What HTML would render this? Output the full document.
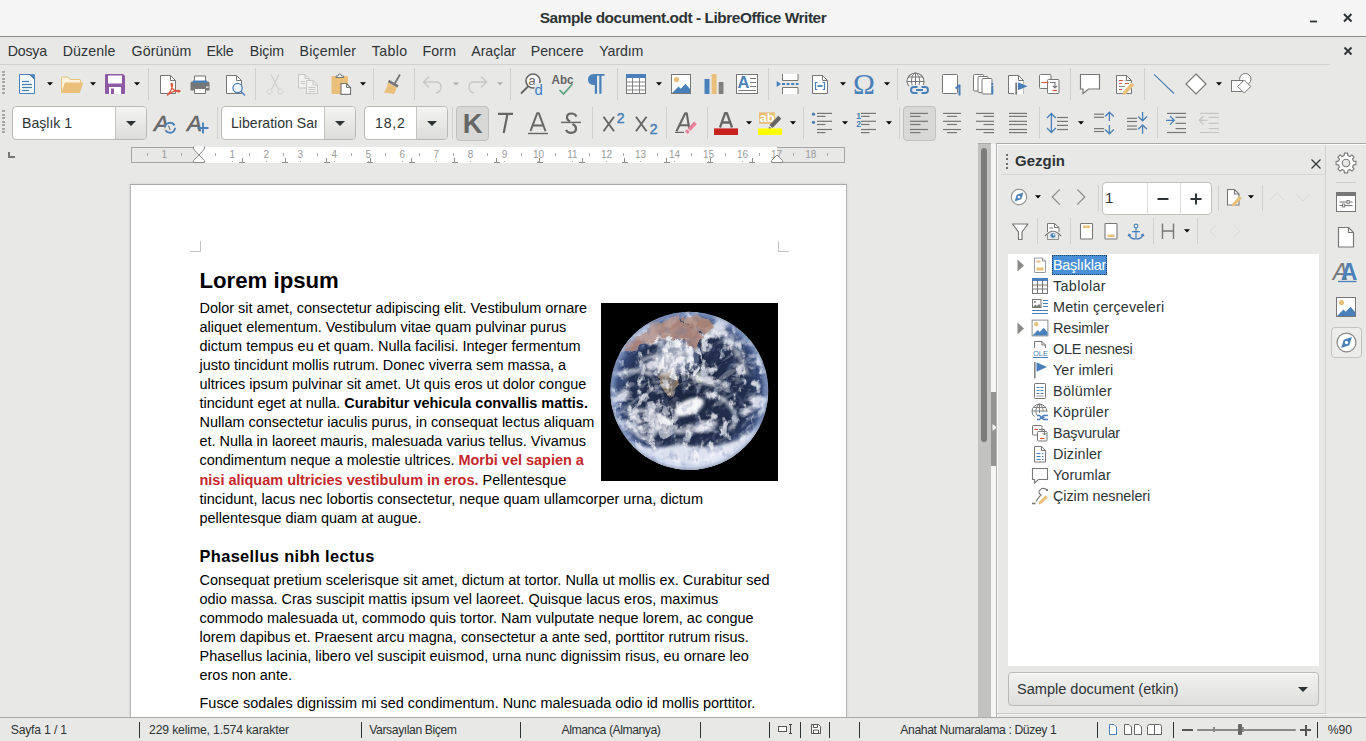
<!DOCTYPE html>
<html lang="tr"><head><meta charset="utf-8"><title>Sample document.odt - LibreOffice Writer</title>
<style>
*{box-sizing:border-box}
html,body{margin:0;padding:0}
body{width:1366px;height:741px;overflow:hidden;position:relative;background:#e8e8e7;font-family:"Liberation Sans",sans-serif;font-size:13.5px;color:#2e3436}
.ic{position:absolute;display:block;overflow:visible}
.sep{position:absolute;width:1px}
#title{position:absolute;left:0;top:0;width:1366px;height:37px;background:#f5f5f5;border-bottom:1px solid #8c8c8c}
#ttext{position:absolute;left:0;width:1366px;top:9px;text-align:center;font-weight:bold;font-size:15.4px;letter-spacing:-.44px;line-height:18px;color:#2e3436}
#menubar{position:absolute;left:0;top:37px;width:1366px;height:28px;background:#e8e8e7}
#menubar:after{content:'';position:absolute;left:0;top:27px;width:1330px;height:1px;background:#d2d2d0}
.mi{position:absolute;top:5.8px;font-size:14.2px;line-height:17px;color:#2e3436;white-space:nowrap}
#toolbars{position:absolute;left:0;top:0;width:1366px;height:145px}
.handle{position:absolute;left:2px;width:3px;height:23px;background:repeating-linear-gradient(to bottom,#a8a8a6 0 2px,transparent 2px 3.5px)}
.combo{position:absolute;background:#fff;border:1px solid #b9b9b6;border-radius:4px;overflow:hidden}
.ctext{position:absolute;top:6.5px;font-size:14.1px;line-height:18px;white-space:nowrap;color:#2e3436}
.cbtn{position:absolute;right:0;top:0;bottom:0;border-left:1px solid #c4c4c1;background:linear-gradient(#f4f4f3,#dcdcda)}
.pressed{position:absolute;background:#d8d8d6;border:1px solid #c1c1be;border-radius:4px}
#rulerL{position:absolute;left:0;top:145px;width:978px;height:40px;background:#e8e8e7}
#ruler{position:absolute;left:131px;top:147px;width:714px;height:16px;background:#fff;overflow:hidden;font-size:10px;color:#9a9a9a}
.rg{position:absolute;top:0;height:16px;background:#e8e8e7;border:1px solid #a4a4a4}

.rn{position:absolute;top:1px;width:20px;text-align:center;line-height:14px}
.rt{position:absolute;top:5.5px;width:1px;height:3px;background:#a8a8a8}
.tab{position:absolute;top:11px;width:6px;height:5px;border-bottom:1px solid #8e8e8e;background:linear-gradient(to right,transparent 2.5px,#8e8e8e 2.5px 3.5px,transparent 3.5px)}
#doc{position:absolute;left:0;top:165px;width:978px;height:552px;overflow:hidden;background:#e8e8e7}
#page{position:absolute;left:130px;top:19px;width:717px;height:900px;background:#fff;border:1px solid #b4b4b4;border-top-color:#a9a9a9;box-shadow:0 0 3px rgba(0,0,0,.12)}
.cm{position:absolute;width:11px;height:11px}
.ln{position:absolute;left:68.5px;margin:0;white-space:nowrap;color:#000}
.bt{font-size:14.47px;line-height:19px}
h1.ln{font-size:22.2px;line-height:26px;font-weight:bold}
h2.ln{font-size:16.4px;line-height:20px;font-weight:bold;letter-spacing:.36px}
.r{color:#c5262a}
#vtrack{position:absolute;left:978px;top:143px;width:13px;height:574px;background:#c2c2c1;border-top:1px solid #a9a9a7}
#vthumb{position:absolute;left:3px;top:4px;width:6px;height:294px;border-radius:3px;background:#7c7c7b}
#split{position:absolute;left:991px;top:144px;width:5px;height:573px;background:#f6f6f6}
#grip{position:absolute;left:0;top:248px;width:6px;height:74px;background:#949493}
#sb{position:absolute;left:996px;top:143px;width:370px;height:574px;background:#e8e8e7;border-top:1px solid #a9a9a7;border-left:1px solid #b4b4b2;box-shadow:inset 1px 1px 0 #fafafa}
#sbtitle{position:absolute;left:1015px;top:151px;font-weight:bold;font-size:15px;line-height:20px;color:#2e3436}
.vdots{position:absolute;width:2px;height:15px;background:repeating-linear-gradient(to bottom,#6e6e6e 0 2px,transparent 2px 4.3px)}
.hl{position:absolute;height:1px;background:#d6d6d4}
#tabbar{position:absolute;left:1325px;top:145px;width:41px;height:572px;border-left:1px solid #d2d2d0;background:#e8e8e7}
#tabsel{position:absolute;left:1331px;top:327px;width:31px;height:31px;border:1px solid #c3c3c0;border-radius:4px;background:#ececeb}
#spin{position:absolute;left:1102px;top:181.5px;width:110px;height:33px;background:#fff;border:1px solid #c0c0bd;border-radius:4px}
#spin span{position:absolute;left:2px;top:6px;font-size:15px;line-height:18px}
#spin i{position:absolute;top:0;bottom:0;width:1px;background:#dcdcda}
#tree{position:absolute;left:1008px;top:254px;width:311px;height:412px;background:#fff;overflow:hidden}
.tr{position:absolute;left:44px;height:20px;line-height:20px;font-size:14.4px;white-space:nowrap;color:#2e3436;padding:0 1px}
.tr.sel{background:#4a90d9;color:#fff;outline:1px dotted #1c3a5c;outline-offset:-1px}
#doccombo{position:absolute;left:1008px;top:672px;width:311px;height:33.5px;border:1px solid #b9b9b6;border-radius:4px;background:linear-gradient(#f2f2f1,#dededc);box-shadow:inset 0 1px 0 #fbfbfb}
#doccombo span{position:absolute;left:8px;top:7px;font-size:14.55px;line-height:18px;white-space:nowrap}
#status{position:absolute;left:0;top:717px;width:1366px;height:24px;background:#e8e8e7;border-top:1px solid #a9a9a7}
.st{position:absolute;top:5px;font-size:12.2px;line-height:14px;white-space:nowrap;color:#2e3436}
.ss{position:absolute;top:4px;width:1px;height:16px;background:#2e3436}
.rd{position:absolute;top:13.5px;width:1px;height:1px;background:#b5b5b5}

</style></head>
<body>
<div id="title"><span id="ttext">Sample document.odt - LibreOffice Writer</span><svg class="ic" style="left:1308px;top:13px" width="12" height="12" viewBox="0 0 12 12"><path d="M2 8.5h7" stroke="#2e3436" stroke-width="1.8"/></svg><svg class="ic" style="left:1340.5px;top:10.5px" width="14" height="14" viewBox="0 0 14 14"><path d="M3 3l7.5 7.5M10.5 3L3 10.5" stroke="#2e3436" stroke-width="2"/></svg></div>
<div id="menubar">
<span class="mi" style="left:7.7px;letter-spacing:-0.20px">Dosya</span>
<span class="mi" style="left:62.7px;letter-spacing:0.12px">Düzenle</span>
<span class="mi" style="left:131.6px;letter-spacing:0.08px">Görünüm</span>
<span class="mi" style="left:206.5px;letter-spacing:-0.13px">Ekle</span>
<span class="mi" style="left:249.8px;letter-spacing:-0.08px">Biçim</span>
<span class="mi" style="left:299.5px;letter-spacing:0.19px">Biçemler</span>
<span class="mi" style="left:371.8px;letter-spacing:0.34px">Tablo</span>
<span class="mi" style="left:422.5px;letter-spacing:0.15px">Form</span>
<span class="mi" style="left:471.2px;letter-spacing:-0.02px">Araçlar</span>
<span class="mi" style="left:530.8px;letter-spacing:-0.02px">Pencere</span>
<span class="mi" style="left:599.3px;letter-spacing:-0.11px">Yardım</span>
<svg class="ic" style="left:1341px;top:6.5px" width="14" height="14" viewBox="0 0 14 14"><path d="M3.5 3.5l7 7M10.5 3.5l-7 7" stroke="#2e3436" stroke-width="1.8"/></svg>
</div>
<div id="toolbars">
<div class="handle" style="top:71px"></div><div class="handle" style="top:110px"></div>
<svg class="ic" style="left:15px;top:72px" width="24" height="24" viewBox="0 0 24 24" ><path d="M4.5 2.5h10.5l4.5 4.5v14.5h-15z" fill="#f4f9fd" stroke="#4a80b9"/><path d="M14.5 2.5l5 5v-5z" fill="#4a80b9" stroke="#4a80b9" stroke-width=".6"/><path d="M7 9.5H14" stroke="#4a80b9" stroke-width="1.2"/><path d="M7 12.5H17" stroke="#4a80b9" stroke-width="1.2"/><path d="M7 15.5H17" stroke="#4a80b9" stroke-width="1.2"/><path d="M7 18.5H14" stroke="#4a80b9" stroke-width="1.2"/></svg>
<svg class="ic" style="left:59px;top:72px" width="24" height="24" viewBox="0 0 24 24" ><path d="M2.5 20.5v-14.5q0-1 1-1h5.5l2 2.5h9.5q1 0 1 1v3" fill="#fdf3de" stroke="#e9bf7a" stroke-width="1"/><path d="M2.3 21l3.2-9.5q.3-1 1.3-1h16.5q1.2 0 .8 1.1l-3 8.6q-.3.8-1.2.8z" fill="#e9bf7a"/></svg>
<svg class="ic" style="left:103px;top:72px" width="24" height="24" viewBox="0 0 24 24" ><path d="M2 3q0-1 1-1h17l2 2v17q0 1-1 1h-18q-1 0-1-1z" fill="#8e5aa6"/><rect x="5" y="3.5" width="14" height="8" fill="#fff"/><rect x="6" y="15" width="12" height="7" fill="#fff"/><rect x="8" y="16.5" width="3" height="5.5" fill="#8e5aa6"/></svg>
<svg class="ic" style="left:156px;top:72px" width="24" height="24" viewBox="0 0 24 24" ><path d="M4.5 3.5h10l5 5v13h-15z" fill="#fff" stroke="#777"/><path d="M14.5 3.5v5h5" fill="none" stroke="#777"/><path d="M11.5 23q4-4 5-9.5q.3-2.2-.7-2.2t-.5 2.2q1.2 5.5 7.5 6.3q1.5 0 1.2-.9t-2.5-.5q-5 .8-10 4.6z" fill="none" stroke="#d9573c" stroke-width="1.3" stroke-linejoin="round"/></svg>
<svg class="ic" style="left:188px;top:72px" width="24" height="24" viewBox="0 0 24 24" ><path d="M2.5 11q0-1.5 1.5-1.5h16q1.5 0 1.5 1.5v7.5h-19z" fill="#777"/><path d="M6.5 9.5v-5.5h11v5.5" fill="#fff" stroke="#777"/><rect x="5" y="8.5" width="14" height="2.3" fill="#4a80b9"/><path d="M6.5 16.5h11v5h-11z" fill="#fff" stroke="#777"/><rect x="18" y="14.5" width="2.5" height="1.2" fill="#fff"/></svg>
<svg class="ic" style="left:222px;top:72px" width="24" height="24" viewBox="0 0 24 24" ><path d="M4.5 3.5h10l5 5v13h-15z" fill="#fff" stroke="#777"/><path d="M14.5 3.5v5h5" fill="none" stroke="#777"/><circle cx="15.6" cy="16" r="4.6" fill="#eef5fb" stroke="#4a80b9" stroke-width="1.3"/><path d="M19 19.5l4 4" stroke="#4a80b9" stroke-width="1.5"/></svg>
<svg class="ic" style="left:262.5px;top:72px" width="24" height="24" viewBox="0 0 24 24" ><path d="M8 2.5l7.5 15M16 2.5l-7.5 15" stroke="#cfcfcd" stroke-width="1.2" fill="none"/><circle cx="6.5" cy="19.5" r="2.5" fill="none" stroke="#c6c6c4" stroke-dasharray="1.5 1"/><circle cx="17.5" cy="19.5" r="2.5" fill="none" stroke="#c6c6c4" stroke-dasharray="1.5 1"/></svg>
<svg class="ic" style="left:296px;top:72px" width="24" height="24" viewBox="0 0 24 24" ><path d="M2.5 2.5h6.5l4 4v9.5h-10.5z" fill="#f2f2f1" stroke="#c6c6c4"/><path d="M9 2.5v4h4" fill="none" stroke="#c6c6c4"/><path d="M10.5 8.5h6.5l4.5 4.5v8.5h-11z" fill="#f2f2f1" stroke="#c6c6c4"/><path d="M17 8.5v4.5h4.5" fill="none" stroke="#c6c6c4"/><path d="M12.5 15.5H19.5" stroke="#c6c6c4" stroke-width="1"/><path d="M12.5 17.5H19.5" stroke="#c6c6c4" stroke-width="1"/><path d="M12.5 19.5H19.5" stroke="#c6c6c4" stroke-width="1"/><path d="M4.5 9.5H9" stroke="#c6c6c4" stroke-width="1"/><path d="M4.5 11.5H9" stroke="#c6c6c4" stroke-width="1"/></svg>
<svg class="ic" style="left:329px;top:72px" width="24" height="24" viewBox="0 0 24 24" ><rect x="2.5" y="4" width="16.5" height="18" rx="1" fill="#e9bf7a"/><path d="M7 5.5v-1.5h2q0-2 1.8-2t1.8 2h2v1.5z" fill="#f4f4f4" stroke="#777" stroke-width="1"/><path d="M12 11.5h5.5l4 4v6.8h-9.5z" fill="#fff" stroke="#777" stroke-width="1.2"/><path d="M17.5 11.5v4h4" fill="none" stroke="#777" stroke-width="1"/></svg>
<svg class="ic" style="left:380px;top:72px" width="24" height="24" viewBox="0 0 24 24" ><path d="M20 2.5l-5.5 9.5" stroke="#777" stroke-width="1.8"/><path d="M8.5 9l9.5 5.5" stroke="#777" stroke-width="2.6"/><path d="M8 10.5l8.5 5q-.5 3.5-2.5 6.5l-10-1.5q3-4 4-10z" fill="#e9bf7a"/></svg>
<svg class="ic" style="left:421px;top:72px" width="24" height="24" viewBox="0 0 24 24" ><path d="M8 4.5l-5.5 5.5 5.5 5.5M2.5 10h12.5q5 0 5 5t-5 6" fill="none" stroke="#c6c6c4" stroke-width="1.3"/></svg>
<svg class="ic" style="left:465px;top:72px" width="24" height="24" viewBox="0 0 24 24" ><path d="M16 4.5l5.5 5.5-5.5 5.5M21.5 10h-12.5q-5 0-5 5t5 6" fill="none" stroke="#c6c6c4" stroke-width="1.3"/></svg>
<svg class="ic" style="left:518.5px;top:72px" width="24" height="24" viewBox="0 0 24 24" ><circle cx="14" cy="9" r="7" fill="#f7f7f7" stroke="#666" stroke-width="1.6"/><path d="M9 14.5l-7 7" stroke="#666" stroke-width="1.8"/><text x="9.6" y="13" font-family="Liberation Sans,sans-serif" font-size="13" fill="#666">a</text><rect x="15.5" y="11" width="8" height="12.5" fill="#dbe9f6"/><text x="15.6" y="22.5" font-family="Liberation Sans,sans-serif" font-size="15" fill="#4a80b9">d</text></svg>
<svg class="ic" style="left:551px;top:72px" width="24" height="24" viewBox="0 0 24 24" ><text x="0.5" y="12" font-family="Liberation Sans,sans-serif" font-weight="bold" font-size="12.5" fill="#666" textLength="22" lengthAdjust="spacingAndGlyphs">Abc</text><path d="M8.5 18l4 4 9-10" fill="none" stroke="#5aa27c" stroke-width="1.7"/></svg>
<svg class="ic" style="left:584px;top:72px" width="24" height="24" viewBox="0 0 24 24" ><path d="M20.5 2v1.8h-3v18h-2.2v-18h-2.3v18h-2.2v-8.8q-6.8 0-6.8-5.5t6.8-5.5z" fill="#4a80b9"/></svg>
<svg class="ic" style="left:624px;top:72px" width="24" height="24" viewBox="0 0 24 24" ><rect x="2.5" y="2.5" width="19" height="19" fill="#fff" stroke="#777"/><rect x="2" y="2" width="20" height="4" fill="#4a80b9"/><path d="M2.5 10h19M2.5 14h19M2.5 18h19M8.5 6v15.5M15.5 6v15.5" stroke="#858585" stroke-width="1" fill="none"/></svg>
<svg class="ic" style="left:669px;top:72px" width="24" height="24" viewBox="0 0 24 24" ><rect x="2.5" y="2.5" width="19" height="19" fill="#fff" stroke="#777"/><circle cx="7.5" cy="7.5" r="2.6" fill="#e9bf7a"/><path d="M3 21l6.5-6.5 2.2 2.2 4.8-5 4.5 5.3v4z" fill="#4a80b9"/></svg>
<svg class="ic" style="left:701.5px;top:72px" width="24" height="24" viewBox="0 0 24 24" ><rect x="2.5" y="7" width="5" height="15" fill="#4a80b9"/><rect x="9.6" y="2" width="5" height="20" fill="#e9bf7a"/><rect x="16.7" y="10" width="4.8" height="12" fill="#808080"/></svg>
<svg class="ic" style="left:734.5px;top:72px" width="24" height="24" viewBox="0 0 24 24" ><rect x="1.5" y="2.5" width="21" height="19" fill="#fff" stroke="#777"/><text x="2.6" y="16" font-family="Liberation Sans,sans-serif" font-weight="bold" font-size="16.5" fill="#4a80b9">A</text><path d="M15 6.5H21" stroke="#777" stroke-width="1"/><path d="M15 10.5H21" stroke="#777" stroke-width="1"/><path d="M15 14.5H21" stroke="#777" stroke-width="1"/><path d="M3.5 18.5H21" stroke="#777" stroke-width="1"/></svg>
<svg class="ic" style="left:775px;top:72px" width="24" height="24" viewBox="0 0 24 24" ><path d="M7.5 2v6.5h15.5v-6.5" fill="#fff" stroke="#777"/><path d="M7.5 22v-6.5h15.5v6.5" fill="#fff" stroke="#777"/><path d="M1.7 9l4.3 3-4.3 3z" fill="#4a80b9"/><path d="M7 12h16.5" stroke="#4a80b9" stroke-width="1.8" stroke-dasharray="3 1.6"/></svg>
<svg class="ic" style="left:808px;top:72px" width="24" height="24" viewBox="0 0 24 24" ><path d="M4.5 3.5h10l5 5v13h-15z" fill="#fff" stroke="#777"/><path d="M14.5 3.5v5h5" fill="none" stroke="#777"/><path d="M9.5 10.5h-2v7h2M14.5 10.5h2v7h-2" fill="none" stroke="#4a80b9" stroke-width="1.2"/><path d="M9.5 14h5" stroke="#4a80b9" stroke-width="1.8"/></svg>
<svg class="ic" style="left:852px;top:72px" width="24" height="24" viewBox="0 0 24 24" ><text x="12" y="21.8" text-anchor="middle" font-family="Liberation Serif,serif" font-size="29.5" fill="#4a80b9">Ω</text></svg>
<svg class="ic" style="left:904px;top:72px" width="24" height="24" viewBox="0 0 24 24" ><path d="M5.2 14q-2.2-2-2.2-4.5q0-3.5 2.5-6t6-2.5q3.5 0 6 2.5t2.5 6q0 1.8-.8 3.3" fill="#fff" stroke="#777" stroke-width="1.1"/><path d="M11.5 1v12.5M3 9.5h17M4.5 5h14M8.3 13.5q-1.8-4-.3-8.5t3.5-4q2 0 3.5 4t0 8.3" fill="none" stroke="#777" stroke-width="1"/><rect x="6" y="13" width="18.5" height="10.5" fill="#e8e8e7"/><path d="M13.5 15h-3.5q-3 0-3 3t3 3h3.5M17.5 15h3.5q3 0 3 3t-3 3h-3.5M12 18h7" fill="none" stroke="#4a80b9" stroke-width="1.9"/></svg>
<svg class="ic" style="left:940px;top:72px" width="24" height="24" viewBox="0 0 24 24" ><rect x="2.5" y="2.5" width="15" height="19" rx="1" fill="#fff" stroke="#777"/><path d="M15 15.8l3.7-3.3h1.8v11h-2v-8.3l-2.3 2z" fill="#4a80b9"/></svg>
<svg class="ic" style="left:970.5px;top:72px" width="24" height="24" viewBox="0 0 24 24" ><rect x="2.5" y="2.5" width="10" height="16.5" rx="1" fill="#fff" stroke="#777"/><rect x="7" y="4.5" width="10" height="16" rx="1" fill="#fff" stroke="#777"/><rect x="11" y="6.5" width="10" height="15.5" rx="1" fill="#fff" stroke="#777"/><rect x="20.3" y="11" width="2" height="2" fill="#4a80b9"/><rect x="20.3" y="14" width="2" height="8.5" fill="#4a80b9"/></svg>
<svg class="ic" style="left:1004px;top:72px" width="24" height="24" viewBox="0 0 24 24" ><path d="M4.5 3.5h10l5 5v13h-15z" fill="#fff" stroke="#777"/><path d="M14.5 3.5v5h5" fill="none" stroke="#777"/><rect x="10" y="9" width="9.5" height="13" fill="#fff"/><path d="M12.2 10.5v12" stroke="#777" stroke-width="1.8"/><path d="M14 10.3v8l9.5-4z" fill="#4a80b9"/></svg>
<svg class="ic" style="left:1036.5px;top:72px" width="24" height="24" viewBox="0 0 24 24" ><rect x="2.5" y="2.5" width="11.5" height="14" rx="1" fill="#fff" stroke="#777"/><rect x="10.5" y="7.5" width="11.5" height="14" rx="1" fill="#fff" stroke="#777"/><path d="M4.5 10.5h7" stroke="#d9573c" stroke-width="1.2"/><path d="M15.5 18.5h4.5" stroke="#d9573c" stroke-width="1.2"/><path d="M13 10.5h5v5.5M15.8 13.8l2.2 2.2 2.2-2.2" fill="none" stroke="#777" stroke-width="1.1"/></svg>
<svg class="ic" style="left:1078px;top:72px" width="24" height="24" viewBox="0 0 24 24" ><path d="M2.5 2.5h19v14.5h-11l-5.5 4.5v-4.5h-2.5z" fill="#fff" stroke="#777" stroke-width="1.2"/></svg>
<svg class="ic" style="left:1111.5px;top:72px" width="24" height="24" viewBox="0 0 24 24" ><path d="M4.5 3.5h10l5 5v13h-15z" fill="#fff" stroke="#777"/><path d="M14.5 3.5v5h5" fill="none" stroke="#777"/><path d="M7 8.5h4M7 11.5h3M13 11.5h4M7 17.5h3" stroke="#d9573c" stroke-width="1.1"/><path d="M7 14.5h6M12.5 8.5h1" stroke="#888" stroke-width="1.1"/><path d="M19.5 10.5l3 2.5-8.5 9-3.5 1 .8-3.5z" fill="#e9bf7a"/></svg>
<svg class="ic" style="left:1152px;top:72px" width="24" height="24" viewBox="0 0 24 24" ><path d="M2 2.3l20 19.2" stroke="#4a80b9" stroke-width="1.150"/></svg>
<svg class="ic" style="left:1184px;top:72px" width="24" height="24" viewBox="0 0 24 24" ><path d="M12 2l10 10-10 10-10-10z" fill="#fff" stroke="#777" stroke-width="1.2"/></svg>
<svg class="ic" style="left:1229px;top:72px" width="24" height="24" viewBox="0 0 24 24" ><circle cx="16.3" cy="7.2" r="5.7" fill="#fff" stroke="#777"/><rect x="2.5" y="8.5" width="11" height="11" fill="#fff" stroke="#777"/><path d="M15.2 8l6.5 6.5-6.5 6.5-6.5-6.5z" fill="#fff" stroke="#777"/></svg>
<svg class="ic" style="left:45.5px;top:80.5px" width="8" height="6" viewBox="0 0 8 6"><path d="M1 1.2h6L4 4.6z" fill="#000"/></svg>
<svg class="ic" style="left:89px;top:80.5px" width="8" height="6" viewBox="0 0 8 6"><path d="M1 1.2h6L4 4.6z" fill="#000"/></svg>
<svg class="ic" style="left:133px;top:80.5px" width="8" height="6" viewBox="0 0 8 6"><path d="M1 1.2h6L4 4.6z" fill="#000"/></svg>
<svg class="ic" style="left:358.5px;top:80.5px" width="8" height="6" viewBox="0 0 8 6"><path d="M1 1.2h6L4 4.6z" fill="#000"/></svg>
<svg class="ic" style="left:451.5px;top:80.5px" width="8" height="6" viewBox="0 0 8 6"><path d="M1 1.2h6L4 4.6z" fill="#b0b0ae"/></svg>
<svg class="ic" style="left:495.5px;top:80.5px" width="8" height="6" viewBox="0 0 8 6"><path d="M1 1.2h6L4 4.6z" fill="#b0b0ae"/></svg>
<svg class="ic" style="left:654.5px;top:80.5px" width="8" height="6" viewBox="0 0 8 6"><path d="M1 1.2h6L4 4.6z" fill="#000"/></svg>
<svg class="ic" style="left:838.5px;top:80.5px" width="8" height="6" viewBox="0 0 8 6"><path d="M1 1.2h6L4 4.6z" fill="#000"/></svg>
<svg class="ic" style="left:882.5px;top:80.5px" width="8" height="6" viewBox="0 0 8 6"><path d="M1 1.2h6L4 4.6z" fill="#000"/></svg>
<svg class="ic" style="left:1214.5px;top:80.5px" width="8" height="6" viewBox="0 0 8 6"><path d="M1 1.2h6L4 4.6z" fill="#000"/></svg>
<div class="sep" style="left:148px;top:68px;height:32px;background:#d0d0ce"></div>
<div class="sep" style="left:255px;top:68px;height:32px;background:#d0d0ce"></div>
<div class="sep" style="left:373px;top:68px;height:32px;background:#d0d0ce"></div>
<div class="sep" style="left:414px;top:68px;height:32px;background:#d0d0ce"></div>
<div class="sep" style="left:510px;top:68px;height:32px;background:#d0d0ce"></div>
<div class="sep" style="left:617px;top:68px;height:32px;background:#d0d0ce"></div>
<div class="sep" style="left:768px;top:68px;height:32px;background:#d0d0ce"></div>
<div class="sep" style="left:897px;top:68px;height:32px;background:#d0d0ce"></div>
<div class="sep" style="left:1070px;top:68px;height:32px;background:#d0d0ce"></div>
<div class="sep" style="left:1144px;top:68px;height:32px;background:#d0d0ce"></div>
<div class="combo" style="left:12px;top:106px;width:135px;height:34px"><span class="ctext" style="left:9px">Başlık 1</span><div class="cbtn" style="width:31px"></div></div>
<svg class="ic" style="left:124.5px;top:120px" width="12" height="7" viewBox="0 0 12 7"><path d="M1 1h10L6 6z" fill="#2e3436"/></svg>
<div class="combo" style="left:221px;top:106px;width:135px;height:34px"><span class="ctext" style="left:9px;width:85.5px;overflow:hidden">Liberation Sans</span><div class="cbtn" style="width:31px"></div></div>
<svg class="ic" style="left:334px;top:120px" width="12" height="7" viewBox="0 0 12 7"><path d="M1 1h10L6 6z" fill="#2e3436"/></svg>
<div class="combo" style="left:364px;top:106px;width:84px;height:34px"><span class="ctext" style="left:10px;letter-spacing:.8px">18,2</span><div class="cbtn" style="width:31px"></div></div>
<svg class="ic" style="left:426px;top:120px" width="12" height="7" viewBox="0 0 12 7"><path d="M1 1h10L6 6z" fill="#2e3436"/></svg>
<div class="pressed" style="left:456px;top:106px;width:33px;height:34.5px"></div>
<div class="pressed" style="left:903px;top:106px;width:33px;height:34.5px"></div>
<svg class="ic" style="left:152.5px;top:111px" width="24" height="24" viewBox="0 0 24 24" ><text stroke="#666" stroke-width=".5" x="8.5" y="20" text-anchor="middle" font-family="Liberation Sans,sans-serif" font-size="22.5" font-weight="normal" font-style="italic" fill="#666">A</text><circle cx="17" cy="16.8" r="5" fill="#e8e8e7" stroke="#4a80b9" stroke-width="1.9" stroke-dasharray="12.5 3.2"/><path d="M15.5 14.5l1.5 4.5" stroke="#777" stroke-width="1.1"/></svg>
<svg class="ic" style="left:185.5px;top:111px" width="24" height="24" viewBox="0 0 24 24" ><text stroke="#666" stroke-width=".5" x="8.5" y="20" text-anchor="middle" font-family="Liberation Sans,sans-serif" font-size="22.5" font-weight="normal" font-style="italic" fill="#666">A</text><path d="M11.5 17h11M17 11.5v11" stroke="#4a80b9" stroke-width="1.8"/></svg>
<svg class="ic" style="left:460px;top:111px" width="24" height="24" viewBox="0 0 24 24" ><text x="12.8" y="22" text-anchor="middle" font-family="Liberation Sans,sans-serif" font-size="27.5" font-weight="bold" font-style="normal" fill="#666">K</text></svg>
<svg class="ic" style="left:493px;top:111px" width="24" height="24" viewBox="0 0 24 24" ><path d="M5 2.9h15M14.5 2.9l-3.8 19.1" stroke="#666" stroke-width="2.2" fill="none"/></svg>
<svg class="ic" style="left:526px;top:111px" width="24" height="24" viewBox="0 0 24 24" ><path d="M4.5 20.2l6.7-18h1.6l6.7 18M6.8 14.5h10.4" fill="none" stroke="#666" stroke-width="1.95" stroke-linejoin="round"/><path d="M2 22.5H22" stroke="#666" stroke-width="1.4"/></svg>
<svg class="ic" style="left:559px;top:111px" width="24" height="24" viewBox="0 0 24 24" ><path d="M17.5 5.5q-1.5-3-5-3q-4.5 0-4.5 4q0 2.5 3 4M13.5 13q3.5 1.5 3.5 4.5q0 4.3-5 4.3q-3.5 0-5-2.8" fill="none" stroke="#666" stroke-width="2.2"/><path d="M2 11.4H22" stroke="#666" stroke-width="1.4"/></svg>
<svg class="ic" style="left:601px;top:111px" width="24" height="24" viewBox="0 0 24 24" ><path d="M2.5 5.8l10.5 14.4M13 5.8l-10.5 14.4" stroke="#666" stroke-width="1.9"/><text stroke="#4a80b9" stroke-width=".5" x="19.6" y="11.9" text-anchor="middle" font-family="Liberation Sans,sans-serif" font-size="14" font-weight="normal" font-style="normal" fill="#4a80b9">2</text></svg>
<svg class="ic" style="left:634px;top:111px" width="24" height="24" viewBox="0 0 24 24" ><path d="M2 5.8l10.5 14.4M12.5 5.8l-10.5 14.4" stroke="#666" stroke-width="1.9"/><text stroke="#4a80b9" stroke-width=".5" x="19.6" y="23" text-anchor="middle" font-family="Liberation Sans,sans-serif" font-size="14" font-weight="normal" font-style="normal" fill="#4a80b9">2</text></svg>
<svg class="ic" style="left:674px;top:111px" width="24" height="24" viewBox="0 0 24 24" ><path d="M2.5 20.2l8.7-18h1.5l2.6 16M6 14.2h8.5" fill="none" stroke="#666" stroke-width="2.1" stroke-linejoin="round"/><path d="M1 21.4H10" stroke="#666" stroke-width="1.2"/><path d="M21.5 11.8l-6.3 6.8" stroke="#e8829c" stroke-width="3.8"/><path d="M14.3 19.6l-1.9 2.1" stroke="#e8829c" stroke-width="3.8"/></svg>
<svg class="ic" style="left:714px;top:111px" width="24" height="24" viewBox="0 0 24 24" ><path d="M6 16.5l5.1-14.3h1.8l5.1 14.3M8 11.5h8" fill="none" stroke="#666" stroke-width="2.3" stroke-linejoin="round"/><rect x="0" y="17.4" width="24" height="6.6" fill="#c9211e"/></svg>
<svg class="ic" style="left:758px;top:111px" width="24" height="24" viewBox="0 0 24 24" ><rect x="1" y="1.3" width="16" height="11.5" fill="#e9bf7a"/><text x="9" y="11.3" text-anchor="middle" font-family="Liberation Sans,sans-serif" font-size="12.5" font-weight="bold" fill="#fff">ab</text><path d="M21.8 6.3l-8.8 9.2" stroke="#666" stroke-width="4.2"/><path d="M12.2 16.4l-1.2 1.5" stroke="#666" stroke-width="2"/><rect x="0" y="17.4" width="24" height="6.6" fill="#ffff00"/></svg>
<svg class="ic" style="left:810px;top:111px" width="24" height="24" viewBox="0 0 24 24" ><path d="M7 2.4H22" stroke="#777" stroke-width="1.2"/><path d="M7 5.4H15.5" stroke="#777" stroke-width="1.2"/><path d="M7 10.3H22" stroke="#777" stroke-width="1.2"/><path d="M7 13.5H15.5" stroke="#777" stroke-width="1.2"/><path d="M7 18.5H22" stroke="#777" stroke-width="1.2"/><path d="M7 21.6H15.5" stroke="#777" stroke-width="1.2"/><circle cx="3.5" cy="3.2" r="1.6" fill="#4a80b9"/><circle cx="3.5" cy="11.3" r="1.6" fill="#4a80b9"/></svg>
<svg class="ic" style="left:854px;top:111px" width="24" height="24" viewBox="0 0 24 24" ><path d="M7 2.4H22" stroke="#777" stroke-width="1.2"/><path d="M7 5.4H15.5" stroke="#777" stroke-width="1.2"/><path d="M7 10.3H22" stroke="#777" stroke-width="1.2"/><path d="M7 13.5H15.5" stroke="#777" stroke-width="1.2"/><path d="M7 18.5H22" stroke="#777" stroke-width="1.2"/><path d="M7 21.6H15.5" stroke="#777" stroke-width="1.2"/><text x="4.5" y="8" text-anchor="middle" font-family="Liberation Sans,sans-serif" font-size="8.5" font-weight="bold" font-style="normal" fill="#4a80b9">1</text><text x="4.5" y="16.2" text-anchor="middle" font-family="Liberation Sans,sans-serif" font-size="8.5" font-weight="bold" font-style="normal" fill="#4a80b9">2</text></svg>
<svg class="ic" style="left:907px;top:111px" width="24" height="24" viewBox="0 0 24 24" ><path d="M3 2.4H21" stroke="#777" stroke-width="1.2"/><path d="M3 5.4H13.5" stroke="#777" stroke-width="1.2"/><path d="M3 10.3H21" stroke="#777" stroke-width="1.2"/><path d="M3 13.5H13.5" stroke="#777" stroke-width="1.2"/><path d="M3 18.5H21" stroke="#777" stroke-width="1.2"/><path d="M3 21.6H13.5" stroke="#777" stroke-width="1.2"/></svg>
<svg class="ic" style="left:940px;top:111px" width="24" height="24" viewBox="0 0 24 24" ><path d="M3 2.4H21" stroke="#777" stroke-width="1.2"/><path d="M7 5.4H17" stroke="#777" stroke-width="1.2"/><path d="M3 10.3H21" stroke="#777" stroke-width="1.2"/><path d="M7 13.5H17" stroke="#777" stroke-width="1.2"/><path d="M3 18.5H21" stroke="#777" stroke-width="1.2"/><path d="M7 21.6H17" stroke="#777" stroke-width="1.2"/></svg>
<svg class="ic" style="left:973px;top:111px" width="24" height="24" viewBox="0 0 24 24" ><path d="M3 2.4H21" stroke="#777" stroke-width="1.2"/><path d="M10.5 5.4H21" stroke="#777" stroke-width="1.2"/><path d="M3 10.3H21" stroke="#777" stroke-width="1.2"/><path d="M10.5 13.5H21" stroke="#777" stroke-width="1.2"/><path d="M3 18.5H21" stroke="#777" stroke-width="1.2"/><path d="M10.5 21.6H21" stroke="#777" stroke-width="1.2"/></svg>
<svg class="ic" style="left:1006px;top:111px" width="24" height="24" viewBox="0 0 24 24" ><path d="M3 2.4H21" stroke="#777" stroke-width="1.2"/><path d="M3 5.4H21" stroke="#777" stroke-width="1.2"/><path d="M3 10.3H21" stroke="#777" stroke-width="1.2"/><path d="M3 13.5H21" stroke="#777" stroke-width="1.2"/><path d="M3 18.5H21" stroke="#777" stroke-width="1.2"/><path d="M3 21.6H21" stroke="#777" stroke-width="1.2"/></svg>
<svg class="ic" style="left:1045.5px;top:111px" width="24" height="24" viewBox="0 0 24 24" ><path d="M5.4 2.5v19M1 7l4.4-4.5 4.4 4.5M1 17l4.4 4.5 4.4-4.5" fill="none" stroke="#4a80b9" stroke-width="1.3"/><path d="M11 6.5H22" stroke="#777" stroke-width="1.2"/><path d="M11 10.4H22" stroke="#777" stroke-width="1.2"/><path d="M11 14.4H22" stroke="#777" stroke-width="1.2"/><path d="M11 18.5H22" stroke="#777" stroke-width="1.2"/></svg>
<svg class="ic" style="left:1092px;top:111px" width="24" height="24" viewBox="0 0 24 24" ><path d="M2 3.2H12" stroke="#777" stroke-width="1.2"/><path d="M2 6.3H12" stroke="#777" stroke-width="1.2"/><path d="M2 17.6H12" stroke="#777" stroke-width="1.2"/><path d="M2 20.5H12" stroke="#777" stroke-width="1.2"/><path d="M17.4 1.5v8.5M13 5.5l4.4-4.3 4.4 4.3M17.4 14v8.5M13 18.5l4.4 4.3 4.4-4.3" fill="none" stroke="#4a80b9" stroke-width="1.3"/></svg>
<svg class="ic" style="left:1125px;top:111px" width="24" height="24" viewBox="0 0 24 24" ><path d="M2 7.3H12" stroke="#777" stroke-width="1.2"/><path d="M2 10.5H12" stroke="#777" stroke-width="1.2"/><path d="M2 15H12" stroke="#777" stroke-width="1.2"/><path d="M2 18.2H12" stroke="#777" stroke-width="1.2"/><path d="M17.6 1v8.5M13.2 5.5l4.4 4.3 4.4-4.3M17.6 14.2v8.5M13.2 18.3l4.4-4.3 4.4 4.3" fill="none" stroke="#4a80b9" stroke-width="1.3"/></svg>
<svg class="ic" style="left:1164px;top:111px" width="24" height="24" viewBox="0 0 24 24" ><path d="M3 2.4H22" stroke="#777" stroke-width="1.2"/><path d="M11.5 6.3H22" stroke="#777" stroke-width="1.2"/><path d="M11.5 12.3H22" stroke="#777" stroke-width="1.2"/><path d="M11.5 17.6H22" stroke="#777" stroke-width="1.2"/><path d="M3 21.5H22" stroke="#777" stroke-width="1.2"/><path d="M2 9.3h8M6 5l4.3 4.3-4.3 4.3" fill="none" stroke="#4a80b9" stroke-width="1.3"/></svg>
<svg class="ic" style="left:1197px;top:111px" width="24" height="24" viewBox="0 0 24 24" ><path d="M3 2.4H22" stroke="#c6c6c4" stroke-width="1.2"/><path d="M11.5 6.3H22" stroke="#c6c6c4" stroke-width="1.2"/><path d="M11.5 12.3H22" stroke="#c6c6c4" stroke-width="1.2"/><path d="M11.5 17.6H22" stroke="#c6c6c4" stroke-width="1.2"/><path d="M3 21.5H22" stroke="#c6c6c4" stroke-width="1.2"/><path d="M2.5 9.3h8M6.5 5l-4.3 4.3 4.3 4.3" fill="none" stroke="#c6c6c4" stroke-width="1.3"/></svg>
<svg class="ic" style="left:744.5px;top:119.5px" width="8" height="6" viewBox="0 0 8 6"><path d="M1 1.2h6L4 4.6z" fill="#000"/></svg>
<svg class="ic" style="left:788.5px;top:119.5px" width="8" height="6" viewBox="0 0 8 6"><path d="M1 1.2h6L4 4.6z" fill="#000"/></svg>
<svg class="ic" style="left:840.5px;top:119.5px" width="8" height="6" viewBox="0 0 8 6"><path d="M1 1.2h6L4 4.6z" fill="#000"/></svg>
<svg class="ic" style="left:884.5px;top:119.5px" width="8" height="6" viewBox="0 0 8 6"><path d="M1 1.2h6L4 4.6z" fill="#000"/></svg>
<svg class="ic" style="left:1076.5px;top:119.5px" width="8" height="6" viewBox="0 0 8 6"><path d="M1 1.2h6L4 4.6z" fill="#000"/></svg>
<div class="sep" style="left:217px;top:107px;height:32px;background:#d0d0ce"></div>
<div class="sep" style="left:452px;top:107px;height:32px;background:#d0d0ce"></div>
<div class="sep" style="left:592px;top:107px;height:32px;background:#d0d0ce"></div>
<div class="sep" style="left:666px;top:107px;height:32px;background:#d0d0ce"></div>
<div class="sep" style="left:707px;top:107px;height:32px;background:#d0d0ce"></div>
<div class="sep" style="left:803px;top:107px;height:32px;background:#d0d0ce"></div>
<div class="sep" style="left:899px;top:107px;height:32px;background:#d0d0ce"></div>
<div class="sep" style="left:1039px;top:107px;height:32px;background:#d0d0ce"></div>
<div class="sep" style="left:1157px;top:107px;height:32px;background:#d0d0ce"></div>
</div>
<div id="rulerL"></div>
<div id="ruler">
<div class="rg" style="left:0;width:69px;border-right:0"></div><div class="rg" style="left:646px;width:68px;border-left:0"></div>
<span class="rn" style="left:23.3px">1</span>
<span class="rn" style="left:91.3px">1</span>
<span class="rn" style="left:125.3px">2</span>
<span class="rn" style="left:159.4px">3</span>
<span class="rn" style="left:193.4px">4</span>
<span class="rn" style="left:227.4px">5</span>
<span class="rn" style="left:261.4px">6</span>
<span class="rn" style="left:295.4px">7</span>
<span class="rn" style="left:329.5px">8</span>
<span class="rn" style="left:363.5px">9</span>
<span class="rn" style="left:397.5px">10</span>
<span class="rn" style="left:431.5px">11</span>
<span class="rn" style="left:465.5px">12</span>
<span class="rn" style="left:499.6px">13</span>
<span class="rn" style="left:533.6px">14</span>
<span class="rn" style="left:567.6px">15</span>
<span class="rn" style="left:601.6px">16</span>
<span class="rn" style="left:635.6px">17</span>
<span class="rn" style="left:669.7px">18</span>
<i class="rt" style="left:15.8px"></i>
<i class="rt" style="left:49.8px"></i>
<i class="rt" style="left:83.8px"></i>
<i class="rt" style="left:117.8px"></i>
<i class="rt" style="left:151.9px"></i>
<i class="rt" style="left:185.9px"></i>
<i class="rt" style="left:219.9px"></i>
<i class="rt" style="left:253.9px"></i>
<i class="rt" style="left:287.9px"></i>
<i class="rt" style="left:322.0px"></i>
<i class="rt" style="left:356.0px"></i>
<i class="rt" style="left:390.0px"></i>
<i class="rt" style="left:424.0px"></i>
<i class="rt" style="left:458.0px"></i>
<i class="rt" style="left:492.1px"></i>
<i class="rt" style="left:526.1px"></i>
<i class="rt" style="left:560.1px"></i>
<i class="rt" style="left:594.1px"></i>
<i class="rt" style="left:628.1px"></i>
<i class="rt" style="left:662.2px"></i>
<i class="rt" style="left:696.2px"></i>
<i class="rd" style="left:100.8px"></i>
<i class="rd" style="left:134.8px"></i>
<i class="rd" style="left:168.9px"></i>
<i class="rd" style="left:202.9px"></i>
<i class="rd" style="left:236.9px"></i>
<i class="rd" style="left:270.9px"></i>
<i class="rd" style="left:304.9px"></i>
<i class="rd" style="left:339.0px"></i>
<i class="rd" style="left:373.0px"></i>
<i class="rd" style="left:407.0px"></i>
<i class="rd" style="left:441.0px"></i>
<i class="rd" style="left:475.0px"></i>
<i class="rd" style="left:509.1px"></i>
<i class="rd" style="left:543.1px"></i>
<i class="rd" style="left:577.1px"></i>
<i class="rd" style="left:611.1px"></i>
<i class="tab" style="left:108.1px"></i>
<i class="tab" style="left:150.6px"></i>
<i class="tab" style="left:193.2px"></i>
<i class="tab" style="left:235.7px"></i>
<i class="tab" style="left:278.2px"></i>
<i class="tab" style="left:320.7px"></i>
<i class="tab" style="left:363.2px"></i>
<i class="tab" style="left:405.8px"></i>
<i class="tab" style="left:448.3px"></i>
<i class="tab" style="left:490.8px"></i>
<i class="tab" style="left:533.3px"></i>
<i class="tab" style="left:575.8px"></i>
<i class="tab" style="left:618.4px"></i>
</div>
<svg class="ic" style="left:192px;top:146px" width="14" height="18" viewBox="0 0 14 18"><path d="M1.5 0.5v2.5l5.5 6 5.5-6v-2.5" fill="#fff" stroke="#8a8a8a"/><path d="M1.5 16.5v-2l5.5-5.5 5.5 5.5v2z" fill="#fff" stroke="#8a8a8a"/></svg>
<svg class="ic" style="left:770px;top:153px" width="14" height="11" viewBox="0 0 14 11"><path d="M1.5 9.5v-2l5.5-5.5 5.5 5.5v2z" fill="#fff" stroke="#8a8a8a"/></svg>
<svg class="ic" style="left:8px;top:152px" width="8" height="7" viewBox="0 0 8 7"><path d="M1 0v5h6" fill="none" stroke="#777" stroke-width="2"/></svg>
<div id="doc"><div id="page">
<i class="cm" style="left:59px;top:56px;border-right:1px solid #c4c4c4;border-bottom:1px solid #c4c4c4"></i>
<i class="cm" style="left:647px;top:56px;border-left:1px solid #c4c4c4;border-bottom:1px solid #c4c4c4"></i>
<h1 class="ln" style="top:83.31px">Lorem ipsum</h1>
<div class="ln bt " style="top:113.51px">Dolor sit amet, consectetur adipiscing elit. Vestibulum ornare</div>
<div class="ln bt " style="top:132.51px">aliquet elementum. Vestibulum vitae quam pulvinar purus</div>
<div class="ln bt " style="top:151.51px">dictum tempus eu et quam. Nulla facilisi. Integer fermentum</div>
<div class="ln bt " style="top:170.51px">justo tincidunt mollis rutrum. Donec viverra sem massa, a</div>
<div class="ln bt " style="top:189.51px">ultrices ipsum pulvinar sit amet. Ut quis eros ut dolor congue</div>
<div class="ln bt " style="top:208.51px">tincidunt eget at nulla. <b>Curabitur vehicula convallis mattis.</b></div>
<div class="ln bt " style="top:227.51px">Nullam consectetur iaculis purus, in consequat lectus aliquam</div>
<div class="ln bt " style="top:246.51px">et. Nulla in laoreet mauris, malesuada varius tellus. Vivamus</div>
<div class="ln bt " style="top:265.51px">condimentum neque a molestie ultrices. <b class="r">Morbi vel sapien a</b></div>
<div class="ln bt " style="top:285.51px"><b class="r">nisi aliquam ultricies vestibulum in eros.</b> Pellentesque</div>
<div class="ln bt " style="top:304.51px">tincidunt, lacus nec lobortis consectetur, neque quam ullamcorper urna, dictum</div>
<div class="ln bt " style="top:323.51px">pellentesque diam quam at augue.</div>
<h2 class="ln" style="top:361.32px">Phasellus nibh lectus</h2>
<div class="ln bt " style="top:385.51px">Consequat pretium scelerisque sit amet, dictum at tortor. Nulla ut mollis ex. Curabitur sed</div>
<div class="ln bt " style="top:404.51px">odio massa. Cras suscipit mattis ipsum vel laoreet. Quisque lacus eros, maximus</div>
<div class="ln bt " style="top:423.51px">commodo malesuada ut, commodo quis tortor. Nam vulputate neque lorem, ac congue</div>
<div class="ln bt " style="top:442.51px">lorem dapibus et. Praesent arcu magna, consectetur a ante sed, porttitor rutrum risus.</div>
<div class="ln bt " style="top:461.51px">Phasellus lacinia, libero vel suscipit euismod, urna nunc dignissim risus, eu ornare leo</div>
<div class="ln bt " style="top:480.51px">eros non ante.</div>
<div class="ln bt " style="top:508.51px">Fusce sodales dignissim mi sed condimentum. Nunc malesuada odio id mollis porttitor.</div>
<div class="ln bt " style="top:528.51px">Suspendisse in purus at mollis, congue dui vel, sagittis elit. Nulla vitae ultricies dolor.</div>
<svg class="ic" id="earth" style="left:470px;top:118px" width="177" height="178" viewBox="0 0 177 178">
<defs>
<radialGradient id="eg" cx="50%" cy="50%" r="50%"><stop offset="0" stop-color="#151e36"/><stop offset=".75" stop-color="#1e2a4a"/><stop offset=".93" stop-color="#35497a"/><stop offset="1" stop-color="#6d84b4"/></radialGradient>
<radialGradient id="limb" cx="50%" cy="50%" r="50%"><stop offset=".9" stop-color="#9db2dc" stop-opacity="0"/><stop offset=".98" stop-color="#9db2dc" stop-opacity=".45"/><stop offset="1" stop-color="#aebfe2" stop-opacity=".7"/></radialGradient>
<clipPath id="ec"><circle cx="88.3" cy="87.7" r="79"/></clipPath>
<filter id="c1" x="0" y="0" width="100%" height="100%"><feTurbulence type="fractalNoise" baseFrequency=".03 .045" numOctaves="6" seed="11"/><feColorMatrix type="matrix" values="0 0 0 0 .95  0 0 0 0 .96  0 0 0 0 1  5.5 0 0 0 -3.0"/></filter>
<filter id="c2" x="0" y="0" width="100%" height="100%"><feTurbulence type="fractalNoise" baseFrequency=".11 .08" numOctaves="5" seed="5"/><feColorMatrix type="matrix" values="0 0 0 0 1  0 0 0 0 1  0 0 0 0 1  0 6 0 0 -3.3"/></filter>
<filter id="c3" x="0" y="0" width="100%" height="100%"><feTurbulence type="fractalNoise" baseFrequency=".05 .16" numOctaves="4" seed="23"/><feColorMatrix type="matrix" values="0 0 0 0 1  0 0 0 0 1  0 0 0 0 1  0 0 5 0 -2.7"/></filter>
<filter id="c4" x="0" y="0" width="100%" height="100%"><feTurbulence type="fractalNoise" baseFrequency=".13 .11" numOctaves="4" seed="41"/><feColorMatrix type="matrix" values="0 0 0 0 1  0 0 0 0 1  0 0 0 0 1  0 6 0 0 -2.7"/></filter>
<clipPath id="cc"><ellipse cx="80" cy="56" rx="21" ry="22"/></clipPath>
<clipPath id="cd"><ellipse cx="52" cy="118" rx="26" ry="20"/></clipPath>
<filter id="dk" x="0" y="0" width="100%" height="100%"><feTurbulence type="fractalNoise" baseFrequency=".16 .12" numOctaves="3" seed="77"/><feColorMatrix type="matrix" values="0 0 0 0 .16  0 0 0 0 .22  0 0 0 0 .4  0 0 4 0 -2.1"/></filter>
<filter id="bl" x="-20%" y="-20%" width="140%" height="140%"><feGaussianBlur stdDeviation="1.6"/></filter>
<filter id="bl2" x="-20%" y="-20%" width="140%" height="140%"><feGaussianBlur stdDeviation="1.1"/></filter>
<filter id="rough" x="-10%" y="-10%" width="120%" height="120%"><feTurbulence type="fractalNoise" baseFrequency=".09" numOctaves="4" seed="2" result="n"/><feDisplacementMap in="SourceGraphic" in2="n" scale="10" xChannelSelector="R" yChannelSelector="G"/><feGaussianBlur stdDeviation=".5"/></filter>
</defs>
<rect width="177" height="178" fill="#000"/>
<circle cx="88.3" cy="87.7" r="79" fill="url(#eg)"/>
<g clip-path="url(#ec)">
 <g filter="url(#rough)">
  <path d="M22 48L38 31L56 19L78 11L84 20L94 28L104 32L97 41L92 48L84 38L72 35L60 36L48 39L34 47z" fill="#a98277"/>
  <path d="M30 40L50 24L70 15L76 30L50 34z" fill="#b79086"/>
  <path d="M82 15L96 12L114 22L106 29L95 29L88 23z" fill="#a8806f"/>
  <path d="M58 72L66 68L76 72L77 82L72 92L66 94L61 84z" fill="#7f6c5c"/>
  <path d="M96 70l4-3 2 6-3 8-3-2z" fill="#6d7a62"/>
  <path d="M60 36L90 36L98 50L94 66L80 72L64 66L56 52z" fill="#596784" opacity=".8"/>
 </g>
 <g filter="url(#bl)" fill="#fff">
  <path d="M20 138Q50 149 80 141Q106 149 138 136Q150 131 160 120L150 150L110 170L60 170L24 150z" fill="#e8ecf7" opacity=".96"/>
  <ellipse cx="88" cy="104" rx="16" ry="7.5" transform="rotate(-24 88 104)" opacity=".97"/>
  <ellipse cx="76" cy="50" rx="15" ry="12" opacity=".5"/>
  <ellipse cx="66" cy="66" rx="10" ry="8" opacity=".55"/>
  <path d="M28 112q14-10 26 2q6 12-4 20q-10 4-16-6q-2-10 8-10" fill="none" stroke="#fff" stroke-width="4" opacity=".75"/>
  <path d="M104 90q22 2 30 22q2 10-6 14" fill="none" stroke="#fff" stroke-width="3.5" opacity=".65"/>
  <path d="M122 36q18 12 24 36" fill="none" stroke="#fff" stroke-width="5" opacity=".45"/>
  <path d="M14 72q20-8 38 0" fill="none" stroke="#fff" stroke-width="4" opacity=".55"/>
  <path d="M56 124q26 10 60-4" fill="none" stroke="#fff" stroke-width="6" opacity=".6"/>
  <path d="M40 58q14-8 28-4" fill="none" stroke="#fff" stroke-width="4" opacity=".6"/>
 </g>
 <rect width="177" height="178" filter="url(#c1)" opacity=".85"/>
 <rect width="177" height="178" filter="url(#c3)" opacity=".3" transform="rotate(-35 88 88)"/>
 <rect width="177" height="178" filter="url(#c2)" opacity=".8"/>
 <g clip-path="url(#cc)"><rect width="177" height="178" filter="url(#c4)" opacity=".85"/></g>
 <g clip-path="url(#cd)"><rect width="177" height="178" filter="url(#c4)" opacity=".6"/></g>
 <g filter="url(#rough)" opacity=".72">
  <path d="M22 48L38 31L56 19L78 11L84 20L94 28L104 32L97 41L92 46L84 36L72 33L60 34L48 38L34 47z" fill="#a98277"/>
  <path d="M82 15L96 12L114 22L106 29L95 29L88 23z" fill="#a8806f"/>
 </g>
 <rect width="177" height="178" filter="url(#dk)" opacity=".34"/>
 <circle cx="88.3" cy="87.7" r="79" fill="#8c9cc2" opacity=".05"/>
 <circle cx="88.3" cy="87.7" r="79" fill="url(#limb)"/>
</g>
<circle cx="88.3" cy="87.7" r="78.7" fill="none" stroke="#000" stroke-width=".8" opacity=".5" filter="url(#bl2)"/>
</svg>
</div></div>
<div id="vtrack"><div id="vthumb"></div></div>
<div id="split"><div id="grip"></div><svg class="ic" style="left:0;top:279px" width="7" height="9" viewBox="0 0 7 9"><path d="M1.5 1l4.5 3.5-4.5 3.5z" fill="#f4f4f4"/></svg></div>
<div id="sb">
</div>
<div id="sbtitle">Gezgin</div>
<div class="vdots" style="left:1005.5px;top:154px"></div>
<svg class="ic" style="left:1310px;top:158px" width="12" height="12" viewBox="0 0 12 12"><path d="M1.5 1.5l9 9M10.5 1.5l-9 9" stroke="#2e3436" stroke-width="1.2"/></svg>
<div class="hl" style="left:1001px;top:174px;width:325px"></div>
<div id="tabbar"></div>
<div class="hl" style="left:1336px;top:182px;width:20px;background:#cfcfcd"></div>
<div id="tabsel"></div>
<svg class="ic" style="left:1334px;top:151px" width="24" height="24" viewBox="0 0 24 24" ><path d="M21.9 10.4L21.9 13.6L19.4 13.9L18.5 15.9L20.1 17.9L17.9 20.1L15.9 18.5L13.9 19.4L13.6 21.9L10.4 21.9L10.1 19.4L8.1 18.5L6.1 20.1L3.9 17.9L5.5 15.9L4.6 13.9L2.1 13.6L2.1 10.4L4.6 10.1L5.5 8.1L3.9 6.1L6.1 3.9L8.1 5.5L10.1 4.6L10.4 2.1L13.6 2.1L13.9 4.6L15.9 5.5L17.9 3.9L20.1 6.1L18.5 8.1L19.4 10.1z" fill="#fff" stroke="#777" stroke-width="1.1" stroke-linejoin="round"/><circle cx="12" cy="12" r="3.7" fill="#e8e8e7" stroke="#777" stroke-width="1.1"/></svg>
<svg class="ic" style="left:1334px;top:189.5px" width="24" height="24" viewBox="0 0 24 24" ><rect x="2.5" y="2.5" width="19" height="19" fill="#fff" stroke="#777"/><rect x="2" y="2" width="20" height="4" fill="#777"/><path d="M5.5 12H18.5" stroke="#777" stroke-width="1.1"/><path d="M5.5 15.5H18.5" stroke="#777" stroke-width="1.1"/><rect x="13" y="10.5" width="2.2" height="3" fill="#fff" stroke="#777" stroke-width=".9"/><rect x="8.5" y="14" width="2.2" height="3" fill="#fff" stroke="#777" stroke-width=".9"/></svg>
<svg class="ic" style="left:1334px;top:224.5px" width="24" height="24" viewBox="0 0 24 24" ><path d="M4.5 2.5h10l5 5v14.5h-15z" fill="#fff" stroke="#777" stroke-width="1.2"/><path d="M14.5 2.5v5h5" fill="none" stroke="#777" stroke-width="1.2"/></svg>
<svg class="ic" style="left:1334px;top:260px" width="24" height="24" viewBox="0 0 24 24" ><text x="6.5" y="19.5" text-anchor="middle" font-family="Liberation Sans,sans-serif" font-size="23" font-weight="normal" font-style="italic" fill="#777">A</text><text x="15" y="19.5" text-anchor="middle" font-family="Liberation Sans,sans-serif" font-size="23" font-weight="bold" font-style="normal" fill="#4a80b9">A</text><path d="M4 21.5H22.5" stroke="#4a80b9" stroke-width="1.3"/></svg>
<svg class="ic" style="left:1334px;top:295px" width="24" height="24" viewBox="0 0 24 24" ><rect x="2.5" y="2.5" width="19" height="19" fill="#fff" stroke="#777"/><circle cx="7.5" cy="7.5" r="2.6" fill="#e9bf7a"/><path d="M3 21l6.5-6.5 2.2 2.2 4.8-5 4.5 5.3v4z" fill="#4a80b9"/></svg>
<svg class="ic" style="left:1332.5px;top:329px" width="27" height="27" viewBox="0 0 24 24" ><circle cx="12" cy="12" r="8.4" fill="#fff" stroke="#888" stroke-width="1.1"/><path d="M16.8 7.2l-2.3 7.3-7.3 2.3 2.3-7.3z" fill="#4a80b9"/><circle cx="12" cy="12" r="1.5" fill="#fff"/></svg>
<svg class="ic" style="left:1008px;top:186px" width="22" height="22" viewBox="0 0 24 24" ><circle cx="12" cy="12" r="8.4" fill="#fff" stroke="#888" stroke-width="1.1"/><path d="M16.8 7.2l-2.3 7.3-7.3 2.3 2.3-7.3z" fill="#4a80b9"/><circle cx="12" cy="12" r="1.5" fill="#fff"/></svg>
<svg class="ic" style="left:1033.5px;top:194px" width="8" height="6" viewBox="0 0 8 6"><path d="M1 1.2h6L4 4.6z" fill="#000"/></svg>
<svg class="ic" style="left:1044px;top:185px" width="24" height="24" viewBox="0 0 24 24" ><path d="M15.8 4.4l-7.6 7.6 7.6 7.6" fill="none" stroke="#8a8a8a" stroke-width="1.2"/></svg>
<svg class="ic" style="left:1068.5px;top:185px" width="24" height="24" viewBox="0 0 24 24" ><path d="M8.2 4.4l7.6 7.6-7.6 7.6" fill="none" stroke="#8a8a8a" stroke-width="1.2"/></svg>
<div class="sep" style="left:1098px;top:185px;height:26px;background:#d0d0ce"></div>
<div id="spin"><span>1</span><i style="left:43.5px"></i><i style="left:76.5px"></i><svg class="ic" style="left:52px;top:8px" width="16" height="16" viewBox="0 0 16 16"><path d="M2.5 8h11" stroke="#2e3436" stroke-width="2"/></svg><svg class="ic" style="left:85px;top:8px" width="16" height="16" viewBox="0 0 16 16"><path d="M2.5 8h11M8 2.5v11" stroke="#2e3436" stroke-width="2"/></svg></div>
<div class="sep" style="left:1218px;top:185px;height:26px;background:#d0d0ce"></div>
<svg class="ic" style="left:1221px;top:185px" width="24" height="24" viewBox="0 0 24 24" ><path d="M6.5 4.5h7l4.5 4.5v11h-11.5z" fill="#fff" stroke="#777" stroke-width="1.1"/><path d="M13.5 4.5v4.5h4.5" fill="none" stroke="#777" stroke-width="1.1"/><path d="M18.5 11l2.5 2-7 7.5-3.2 1 .7-3z" fill="#e9bf7a"/></svg>
<svg class="ic" style="left:1247px;top:194px" width="8" height="6" viewBox="0 0 8 6"><path d="M1 1.2h6L4 4.6z" fill="#000"/></svg>
<div class="sep" style="left:1262px;top:185px;height:26px;background:#d0d0ce"></div>
<svg class="ic" style="left:1265px;top:185px" width="24" height="24" viewBox="0 0 24 24" ><path d="M5 15l7-7 7 7" fill="none" stroke="#dbdbd9" stroke-width="1"/></svg>
<svg class="ic" style="left:1291px;top:185px" width="24" height="24" viewBox="0 0 24 24" ><path d="M5 9l7 7 7-7" fill="none" stroke="#dbdbd9" stroke-width="1"/></svg>
<svg class="ic" style="left:1007.5px;top:218.5px" width="24" height="24" viewBox="0 0 24 24" ><path d="M4.5 5h15.5l-6 8v7.5h-3.5v-7.5z" fill="#fff" stroke="#777" stroke-width="1.2" stroke-linejoin="round"/></svg>
<div class="sep" style="left:1037px;top:218px;height:26px;background:#d0d0ce"></div>
<svg class="ic" style="left:1041px;top:218.5px" width="24" height="24" viewBox="0 0 24 24" ><path d="M6.5 13v-8.5h7l4.5 4v4.5" fill="#fff" stroke="#777" stroke-width="1"/><path d="M13.5 4.5v4h4.5" fill="none" stroke="#777"/><path d="M8.5 9H12" stroke="#777" stroke-width="1"/><path d="M4 17q8-9.5 16 0" fill="none" stroke="#777" stroke-width="1.2"/><path d="M6.5 15.5v5h11v-5" fill="none" stroke="#777" stroke-width=".8"/><circle cx="12" cy="16.5" r="2.8" fill="#4a80b9" stroke="#fff" stroke-width=".6"/><circle cx="12.8" cy="15.8" r=".9" fill="#fff"/></svg>
<div class="sep" style="left:1070px;top:218px;height:26px;background:#d0d0ce"></div>
<svg class="ic" style="left:1073.5px;top:218.5px" width="24" height="24" viewBox="0 0 24 24" ><rect x="6.5" y="4.5" width="12" height="15.5" rx=".8" fill="#fff" stroke="#777" stroke-width="1.1"/><rect x="9" y="6.5" width="7" height="2.6" fill="#e9bf7a"/></svg>
<svg class="ic" style="left:1099px;top:218.5px" width="24" height="24" viewBox="0 0 24 24" ><rect x="6" y="4.5" width="12" height="15.5" rx=".8" fill="#fff" stroke="#777" stroke-width="1.1"/><rect x="8.5" y="15.5" width="7" height="2.6" fill="#e9bf7a"/></svg>
<svg class="ic" style="left:1123.5px;top:218.5px" width="24" height="24" viewBox="0 0 24 24" ><circle cx="12" cy="7" r="1.9" fill="none" stroke="#4a80b9" stroke-width="1.1"/><path d="M12 9v11M8 12.7h8M5 15.5q1 4.5 7 4.5t7-4.5M4 17.2l1-2 2 1M20 17.2l-1-2-2 1" fill="none" stroke="#4a80b9" stroke-width="1.2"/></svg>
<div class="sep" style="left:1153px;top:218px;height:26px;background:#d0d0ce"></div>
<svg class="ic" style="left:1156px;top:218.5px" width="24" height="24" viewBox="0 0 24 24" ><path d="M6.5 4.5v15.5M17.5 4.5v15.5M6.5 12h11" fill="none" stroke="#777" stroke-width="1.4"/></svg>
<svg class="ic" style="left:1182.5px;top:227.5px" width="8" height="6" viewBox="0 0 8 6"><path d="M1 1.2h6L4 4.6z" fill="#000"/></svg>
<div class="sep" style="left:1197px;top:218px;height:26px;background:#d0d0ce"></div>
<svg class="ic" style="left:1201px;top:218.5px" width="24" height="24" viewBox="0 0 24 24" ><path d="M15 6l-6 6 6 6" fill="none" stroke="#dbdbd9" stroke-width="1"/></svg>
<svg class="ic" style="left:1225px;top:218.5px" width="24" height="24" viewBox="0 0 24 24" ><path d="M9 6l6 6-6 6" fill="none" stroke="#dbdbd9" stroke-width="1"/></svg>
<div id="tree">
<svg class="ic" style="left:8px;top:5px" width="10" height="13" viewBox="0 0 10 13"><path d="M1.5 0.5l6.5 6-6.5 6z" fill="#8b8b8a"/></svg>
<svg class="ic" style="left:20px;top:-1px" width="24" height="24" viewBox="0 0 24 24" ><path d="M6.5 5h8l3 3v11.5h-11z" fill="#fff" stroke="#999" stroke-width="1"/><path d="M14.5 5v3h3" fill="none" stroke="#999"/><rect x="8.5" y="7.5" width="4" height="2" fill="#e9bf7a"/><rect x="8.5" y="14.5" width="7" height="3" fill="#e9bf7a"/></svg>
<span class="tr sel" style="top:1px;letter-spacing:-0.24px">Başlıklar</span>
<svg class="ic" style="left:20px;top:20px" width="24" height="24" viewBox="0 0 24 24" ><rect x="4.5" y="4.5" width="15" height="15" fill="#fff" stroke="#777"/><rect x="4" y="4" width="16" height="3" fill="#4a80b9"/><path d="M4.5 11h15M4.5 15h15M9.5 7v12.5M14.5 7v12.5" stroke="#777" fill="none"/></svg>
<span class="tr" style="top:22px;letter-spacing:0.32px">Tablolar</span>
<svg class="ic" style="left:20px;top:41px" width="24" height="24" viewBox="0 0 24 24" ><rect x="4.5" y="4.5" width="8.5" height="8" fill="#fff" stroke="#777"/><path d="M5 12l2.5-2.5 1.5 1.5 2-2 1.5 1.5v1.5z" fill="#777"/><circle cx="7" cy="7" r="1" fill="#777"/><path d="M15 5.5H20" stroke="#4a80b9" stroke-width="1"/><path d="M15 8.5H20" stroke="#4a80b9" stroke-width="1"/><path d="M15 11.5H20" stroke="#4a80b9" stroke-width="1"/><path d="M4 15.5H20" stroke="#4a80b9" stroke-width="1"/><path d="M4 18.5H20" stroke="#4a80b9" stroke-width="1"/></svg>
<span class="tr" style="top:43px;letter-spacing:0.15px">Metin çerçeveleri</span>
<svg class="ic" style="left:8px;top:68px" width="10" height="13" viewBox="0 0 10 13"><path d="M1.5 0.5l6.5 6-6.5 6z" fill="#8b8b8a"/></svg>
<svg class="ic" style="left:22px;top:64px" width="20" height="20" viewBox="0 0 24 24" ><rect x="2.5" y="2.5" width="19" height="19" fill="#fff" stroke="#777"/><circle cx="7.5" cy="7.5" r="2.6" fill="#e9bf7a"/><path d="M3 21l6.5-6.5 2.2 2.2 4.8-5 4.5 5.3v4z" fill="#4a80b9"/></svg>
<span class="tr" style="top:64px;letter-spacing:-0.11px">Resimler</span>
<svg class="ic" style="left:20px;top:83px" width="24" height="24" viewBox="0 0 24 24" ><path d="M6.5 11v-6.5h7.5l3.5 3.5v3" fill="#fff" stroke="#777"/><path d="M14 4.5v3.5h3.5" fill="none" stroke="#777"/><text x="12.5" y="18.5" text-anchor="middle" font-family="Liberation Sans,sans-serif" font-size="8" fill="#4a80b9" textLength="15" lengthAdjust="spacingAndGlyphs">OLE</text><path d="M5 20.5H20" stroke="#4a80b9" stroke-width="1"/></svg>
<span class="tr" style="top:85px;letter-spacing:-0.28px">OLE nesnesi</span>
<svg class="ic" style="left:20px;top:104px" width="24" height="24" viewBox="0 0 24 24" ><path d="M6.8 4v16.5" stroke="#777" stroke-width="1.4"/><path d="M8.5 4.2v9.6l10.5-4.8z" fill="#4a80b9"/></svg>
<span class="tr" style="top:106px;letter-spacing:0.08px">Yer imleri</span>
<svg class="ic" style="left:20px;top:125px" width="24" height="24" viewBox="0 0 24 24" ><rect x="6.5" y="4.5" width="11" height="15" rx=".8" fill="#fff" stroke="#777"/><path d="M8.5 8.5H11.5" stroke="#4a80b9" stroke-width="1"/><path d="M12.5 8.5H15.5" stroke="#4a80b9" stroke-width="1"/><path d="M8.5 11.5H11.5" stroke="#4a80b9" stroke-width="1"/><path d="M12.5 11.5H15.5" stroke="#4a80b9" stroke-width="1"/><path d="M8.5 14.5H11.5" stroke="#4a80b9" stroke-width="1"/><path d="M12.5 14.5H15.5" stroke="#4a80b9" stroke-width="1"/><path d="M8.5 17H15.5" stroke="#777" stroke-width="0.8"/></svg>
<span class="tr" style="top:127px;letter-spacing:0.30px">Bölümler</span>
<svg class="ic" style="left:20px;top:146px" width="24" height="24" viewBox="0 0 24 24" ><path d="M6.5 16.5q-2.5-2-2.5-5q0-3 2.2-5.2t5.3-2.2q3 0 5.2 2.2t2.3 5.2v.5" fill="#fff" stroke="#777" stroke-width="1"/><path d="M11.5 4v9M4 11h15M5.5 7.5h12M8.5 15q-1.5-4 0-7.5t3-3.5q1.5 0 3 3.5q.8 2 .5 4" fill="none" stroke="#777" stroke-width=".9"/><path d="M9 15.5h2.5l2 2 2-2h4.5M9 19.5h2.5l2-2 2 2h4.5M12 17.5h4.5" fill="none" stroke="#4a80b9" stroke-width="1.4"/></svg>
<span class="tr" style="top:148px;letter-spacing:0.19px">Köprüler</span>
<svg class="ic" style="left:20px;top:167px" width="24" height="24" viewBox="0 0 24 24" ><rect x="4.5" y="4.5" width="9.5" height="9.5" rx=".8" fill="#fff" stroke="#777"/><rect x="9.5" y="10.5" width="9.5" height="9.5" rx=".8" fill="#fff" stroke="#777"/><path d="M6.5 8.5h3.5" stroke="#d9573c" stroke-width="1.2"/><path d="M12 17.5h4.5" stroke="#d9573c" stroke-width="1.2"/><path d="M11 8.5h5.5v5M14.5 12l2 2 2-2" fill="none" stroke="#777" stroke-width="1"/></svg>
<span class="tr" style="top:169px;letter-spacing:-0.19px">Başvurular</span>
<svg class="ic" style="left:20px;top:188px" width="24" height="24" viewBox="0 0 24 24" ><path d="M6.5 4.5h7l4 4v11.5h-11z" fill="#fff" stroke="#777"/><path d="M13.5 4.5v4h4" fill="none" stroke="#777"/><path d="M8.5 11.5H12.5" stroke="#4a80b9" stroke-width="1"/><path d="M14 11.5H15.5" stroke="#4a80b9" stroke-width="1"/><path d="M8.5 14.5H12.5" stroke="#4a80b9" stroke-width="1"/><path d="M14 14.5H15.5" stroke="#4a80b9" stroke-width="1"/><path d="M8.5 17.5H12.5" stroke="#4a80b9" stroke-width="1"/><path d="M14 17.5H15.5" stroke="#4a80b9" stroke-width="1"/></svg>
<span class="tr" style="top:190px;letter-spacing:0.13px">Dizinler</span>
<svg class="ic" style="left:20px;top:209px" width="24" height="24" viewBox="0 0 24 24" ><path d="M4.5 5.5h15v11h-9l-4 3.5v-3.5h-2z" fill="#fff" stroke="#777" stroke-width="1.1"/></svg>
<span class="tr" style="top:211px;letter-spacing:0.09px">Yorumlar</span>
<svg class="ic" style="left:20px;top:230px" width="24" height="24" viewBox="0 0 24 24" ><path d="M8 17.5q2-4 5-6.5q-3.5-2-1-5t6.5-.5" fill="none" stroke="#777" stroke-width="1.1"/><path d="M4 19.5h3.5" stroke="#777" stroke-width="1.6"/><rect x="18" y="5" width="2" height="2" fill="#777"/><path d="M17.5 11.5l2.5 2-6.5 6-3 1 .8-3z" fill="#e9bf7a"/></svg>
<span class="tr" style="top:232px;letter-spacing:-0.08px">Çizim nesneleri</span>
</div>
<div class="hl" style="left:997px;top:713px;width:329px;background:#cdcdcb"></div><div class="hl" style="left:997px;top:714px;width:369px;background:#f1f1f0"></div>
<div id="doccombo"><span>Sample document (etkin)</span></div>
<svg class="ic" style="left:1296.5px;top:686px" width="12" height="7" viewBox="0 0 12 7"><path d="M1 1h10L6 6z" fill="#2e3436"/></svg>
<div id="status">
<span class="st" style="left:10.7px;letter-spacing:-0.19px">Sayfa 1 / 1</span>
<span class="st" style="left:149.0px;letter-spacing:-0.14px">229 kelime, 1.574 karakter</span>
<span class="st" style="left:369.3px;letter-spacing:-0.42px">Varsayılan Biçem</span>
<span class="st" style="left:561.6px;letter-spacing:-0.44px">Almanca (Almanya)</span>
<span class="st" style="left:900.3px;letter-spacing:-0.39px">Anahat Numaralama : Düzey 1</span>
<span class="st" style="left:1327.8px;letter-spacing:-0.07px">%90</span>
<i class="ss" style="left:139px"></i>
<i class="ss" style="left:361px"></i>
<i class="ss" style="left:520px"></i>
<i class="ss" style="left:700px"></i>
<i class="ss" style="left:769px"></i>
<i class="ss" style="left:799.5px"></i>
<i class="ss" style="left:829px"></i>
<i class="ss" style="left:859px"></i>
<i class="ss" style="left:1096.5px"></i>
<i class="ss" style="left:1173px"></i>
<i class="ss" style="left:1317px"></i>
</div>
<svg class="ic" style="left:777px;top:723px" width="18" height="12" viewBox="0 0 18 12"><rect x="1.5" y="3.5" width="8" height="5" fill="#fff" stroke="#555"/><path d="M12 1.5h3M12 10.5h3M13.5 1.5v9" stroke="#444" fill="none"/></svg>
<svg class="ic" style="left:810px;top:723px" width="12" height="12" viewBox="0 0 12 12"><path d="M1.5 1.5h7l2 2v7h-9z" fill="#fff" stroke="#555"/><path d="M3.5 1.5v3h4v-3M3.5 10.5v-3.5h5v3.5" fill="none" stroke="#555"/></svg>
<svg class="ic" style="left:1107px;top:723px" width="12" height="13" viewBox="0 0 12 13"><path d="M2.5 1.5h4.5l2.5 2.5v7.5h-7z" fill="#fff" stroke="#4a7fb8"/></svg>
<svg class="ic" style="left:1123px;top:723px" width="20" height="13" viewBox="0 0 20 13"><path d="M1.5 1.5h4.5l2.5 2.5v7.5h-7z M11.5 1.5h4.5l2.5 2.5v7.5h-7z" fill="#fff" stroke="#666"/></svg>
<svg class="ic" style="left:1146px;top:723px" width="18" height="13" viewBox="0 0 18 13"><path d="M1.5 3.5q0-2 2-2h5v10h-7z M8.5 1.5h5q2 0 2 2v8h-7z" fill="#fff" stroke="#666"/></svg>
<div style="position:absolute;left:1182px;top:729px;width:11px;height:2px;background:#555"></div>
<div style="position:absolute;left:1197px;top:729px;width:99px;height:2px;background:#8a8a8a;border-radius:1px"></div>
<div style="position:absolute;left:1212.5px;top:727px;width:2px;height:5px;background:#8a8a8a"></div>
<div style="position:absolute;left:1238px;top:724px;width:4px;height:11px;background:#666;border-radius:1px"></div>
<div style="position:absolute;left:1242px;top:727px;width:2px;height:5px;background:#8a8a8a"></div>
<div style="position:absolute;left:1300px;top:729px;width:11px;height:2px;background:#555"></div><div style="position:absolute;left:1304.5px;top:724.5px;width:2px;height:11px;background:#555"></div>
</body></html>
